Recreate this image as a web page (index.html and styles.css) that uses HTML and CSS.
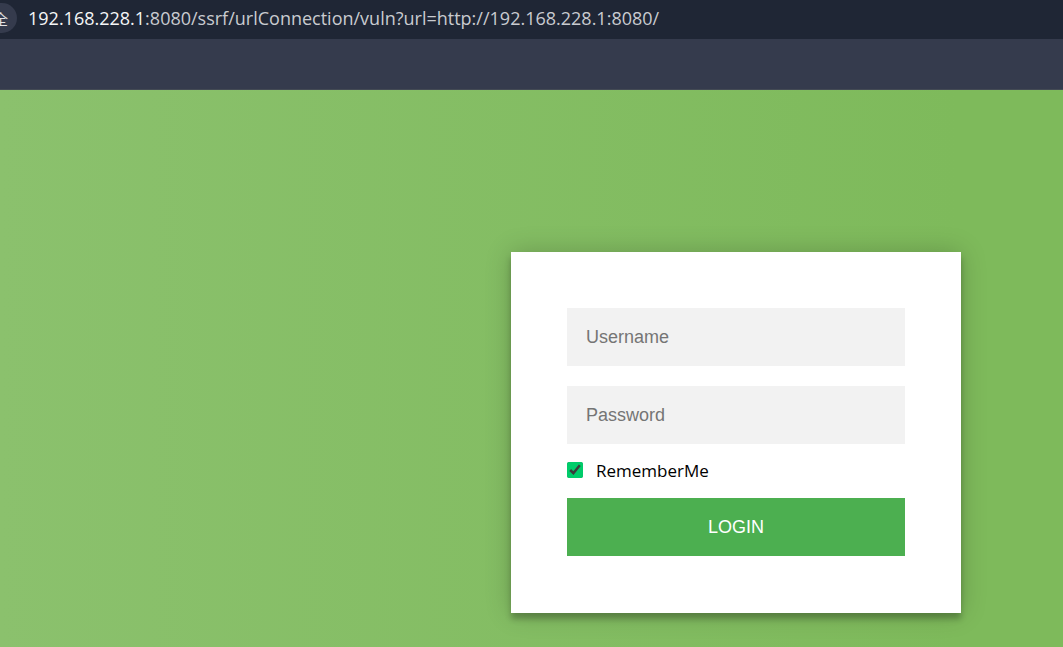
FILE: index.html
```html
<!DOCTYPE html>
<html lang="en">
<head>
<meta charset="utf-8">
<title>Login</title>
<link rel="stylesheet" href="styles.css">
</head>
<body>
<header class="address-bar">
  <span class="security" lang="zh">全</span>
  <div class="url"><span class="host">192.168.228.1</span>:8080/ssrf/urlConnection/vuln?url=http://192.168.228.1:8080/</div>
</header>
<div class="bookmarks"></div>
<main class="page">
  <form class="card">
    <input class="field" type="text" placeholder="Username" aria-label="Username">
    <input class="field" type="password" placeholder="Password" aria-label="Password">
    <label class="remember"><input class="check" type="checkbox" checked>RememberMe</label>
    <button class="login" type="button">LOGIN</button>
  </form>
</main>
</body>
</html>
```
FILE: styles.css
```css
* {
  box-sizing: border-box;
}

body {
  margin: 0;
  min-height: 100vh;
  display: flex;
  flex-direction: column;
  font-family: "Open Sans", "Noto Sans CJK SC", sans-serif;
}

.address-bar {
  display: flex;
  align-items: center;
  gap: 11px;
  height: 39px;
  padding-bottom: 3px;
  background: #1f2635;
  color: #c9cbd0;
}

.security {
  display: flex;
  justify-content: flex-end;
  align-items: center;
  width: 17px;
  height: 30px;
  padding-right: 9px;
  overflow: hidden;
  border-radius: 0 15px 15px 0;
  background: #353b4d;
  color: #e3e3e6;
  font-family: "Noto Sans CJK SC", sans-serif;
  font-size: 15px;
}

.url {
  font-size: 18px;
  line-height: 24px;
  white-space: nowrap;
}

.host {
  color: #f5f6f7;
}

.bookmarks {
  height: 51px;
  background: #353b4d;
  border-bottom: 1px solid #434a54;
}

.page {
  flex: 1;
  padding: 162px 102px 34px;
  background: linear-gradient(to right, #8bc16d, #7eba5b 90%);
}

.card {
  display: flex;
  flex-direction: column;
  max-width: 450px;
  margin-left: auto;
  padding: 56px 56px 57px;
  background: #fff;
  box-shadow: 0 0 25px rgba(0, 0, 0, 0.2), 0 6px 6px rgba(0, 0, 0, 0.24);
}

.field {
  width: 100%;
  height: 58px;
  margin: 0 0 20px;
  padding: 0 19px;
  border: 0;
  border-radius: 0;
  outline: 0;
  background: #f2f2f2;
  font-family: "Liberation Sans", Arial, sans-serif;
  font-size: 18px;
}

.field::placeholder {
  color: #757575;
}

.field + .remember {
  margin-top: -5px;
}

.remember {
  display: flex;
  align-items: center;
  gap: 13px;
  height: 22px;
  margin-bottom: 17px;
  color: #000;
  font-size: 17px;
}

.check {
  width: 16px;
  height: 16px;
  margin: 0;
  accent-color: #00cc6a;
}

.login {
  height: 58px;
  border: 0;
  background: #4caf50;
  color: #fff;
  font-family: "Liberation Sans", Arial, sans-serif;
  font-size: 18px;
}
```
